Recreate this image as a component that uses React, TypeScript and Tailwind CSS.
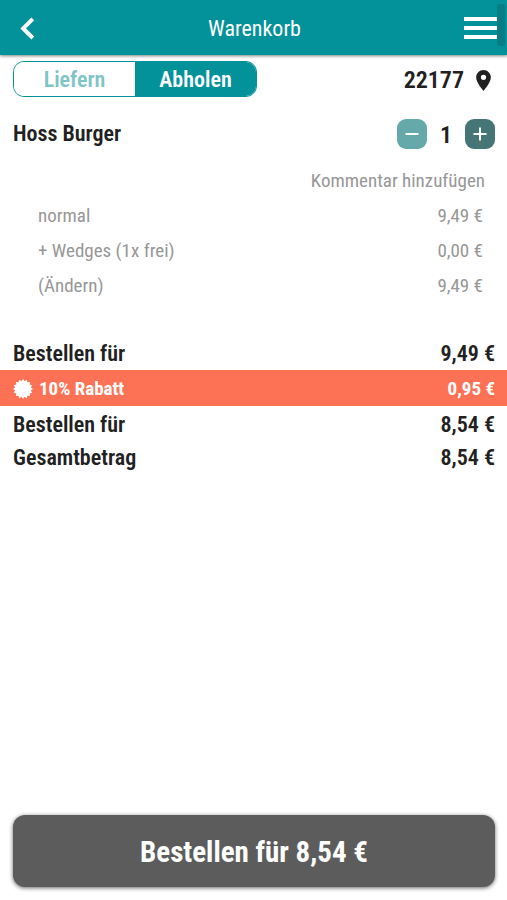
import { useState } from "react";

const options = [
  { label: "normal", price: "9,49 €" },
  { label: "+ Wedges (1x frei)", price: "0,00 €" },
  { label: "(Ändern)", price: "9,49 €" },
];

const burst = Array.from({ length: 32 }, (_, i) => {
  const r = i % 2 === 0 ? 10 : 8;
  const a = (Math.PI * 2 * i) / 32;
  return `${(10 + r * Math.sin(a)).toFixed(2)},${(10 - r * Math.cos(a)).toFixed(2)}`;
}).join(" ");

function TotalRow({ label, price }: { label: string; price: string }) {
  return (
    <div className="flex h-[33px] items-center justify-between pr-3 pl-[13px] text-[22px] leading-[26px] font-semibold">
      <dt>{label}</dt>
      <dd>{price}</dd>
    </div>
  );
}

export default function App() {
  const [pickup, setPickup] = useState(true);
  const [count, setCount] = useState(1);
  const on = "bg-[#03929a] text-white";
  const off = "bg-white text-[#7fc5c8]";

  return (
    <div className="flex min-h-screen flex-col bg-white font-['Roboto_Condensed','Roboto',sans-serif] text-[#212121]">
      <header className="relative grid h-[55px] grid-cols-[1fr_auto_1fr] items-center bg-[#03929a] pr-[10px] pl-[18px] text-white shadow-[0_1px_3px_rgba(0,0,0,0.5)]">
        <button type="button" aria-label="Zurück" className="justify-self-start">
          <svg width="18" height="24" viewBox="0 0 18 24" fill="none" stroke="currentColor" strokeWidth="4">
            <path d="M14.8 2.8 L5.2 12.4 L14.8 22" />
          </svg>
        </button>
        <h1 className="pt-0.5 pr-1.5 text-[22px] leading-[26px]">Warenkorb</h1>
        <button type="button" aria-label="Menü" className="justify-self-end">
          <svg width="33" height="24" viewBox="0 0 33 24" fill="currentColor">
            <path d="M0 1h33v4H0zM0 10h33v4H0zM0 19h33v4H0z" />
          </svg>
        </button>
        <span className="absolute top-1 right-0.5 h-[42px] w-2 rounded-[3px] bg-[#087d86]" />
      </header>

      <main className="flex grow flex-col">
        <div className="flex items-center justify-between pt-1.5 pr-4 pl-[13px]">
          <div className="grid h-9 w-[244px] grid-cols-2 overflow-hidden rounded-[11px] border border-[#03929a] text-[22px] leading-[26px] font-semibold">
            <button type="button" onClick={() => setPickup(false)} className={`pt-0.5 ${pickup ? off : on}`}>
              Liefern
            </button>
            <button type="button" onClick={() => setPickup(true)} className={`pt-0.5 ${pickup ? on : off}`}>
              Abholen
            </button>
          </div>
          <button type="button" className="flex items-center gap-3 pt-0.5 text-2xl leading-7 font-semibold">
            22177
            <svg width="15" height="21" viewBox="5 2 14 20" fill="currentColor">
              <path d="M12 2C8.130 2 5 5.130 5 9c0 5.250 7 13 7 13s7-7.750 7-13c0-3.870-3.130-7-7-7zm0 9.500a2.500 2.500 0 1 1 0-5 2.500 2.500 0 0 1 0 5z" />
            </svg>
          </button>
        </div>

        <section className="mt-[22px]">
          <div className="flex h-[30px] items-center justify-between pr-3 pl-[13px] font-semibold">
            <h2 className="text-[22px] leading-[26px]">Hoss Burger</h2>
            <div className="flex items-center">
              <button
                type="button"
                aria-label="Weniger"
                onClick={() => setCount(Math.max(0, count - 1))}
                className="flex size-[30px] items-center justify-center rounded-[9px] bg-[#66a9aa] text-white"
              >
                <svg width="14" height="14" viewBox="0 0 14 14" fill="none" stroke="currentColor" strokeWidth="2">
                  <path d="M0.500 7h13" />
                </svg>
              </button>
              <span className="w-[38px] pt-0.5 text-center text-2xl leading-7">{count}</span>
              <button
                type="button"
                aria-label="Mehr"
                onClick={() => setCount(count + 1)}
                className="flex size-[30px] items-center justify-center rounded-[9px] bg-[#467576] text-white"
              >
                <svg width="14" height="14" viewBox="0 0 14 14" fill="none" stroke="currentColor" strokeWidth="2">
                  <path d="M0.500 7h13M7 0.500v13" />
                </svg>
              </button>
            </div>
          </div>
          <div className="mt-3.5 text-[19px] leading-6 text-[#979797]">
            <button type="button" className="ml-auto flex h-[35px] items-center pr-[22px]">
              Kommentar hinzufügen
            </button>
            <ul>
              {options.map((o) => (
                <li key={o.label} className="flex h-[35px] items-center justify-between pr-6 pl-[38px]">
                  <span>{o.label}</span>
                  <span>{o.price}</span>
                </li>
              ))}
            </ul>
          </div>
        </section>

        <dl className="mt-[34px]">
          <TotalRow label="Bestellen für" price="9,49 €" />
          <div className="mb-0.5 flex h-9 items-center justify-between bg-[#fd7254] pt-0.5 pr-3 pl-[13px] text-[19px] leading-6 font-bold text-white">
            <dt className="flex items-center gap-1.5">
              <svg width="20" height="20" viewBox="0 0 20 20" fill="currentColor">
                <polygon points={burst} />
              </svg>
              10% Rabatt
            </dt>
            <dd>0,95 €</dd>
          </div>
          <TotalRow label="Bestellen für" price="8,54 €" />
          <TotalRow label="Gesamtbetrag" price="8,54 €" />
        </dl>
      </main>

      <footer className="pr-3 pb-[13px] pl-[13px]">
        <button
          type="button"
          className="h-[72px] w-full rounded-xl bg-[#5c5c5c] pt-0.5 text-[29px] leading-9 font-bold text-white shadow-[0_1px_4px_rgba(0,0,0,0.6)]"
        >
          Bestellen für 8,54 €
        </button>
      </footer>
    </div>
  );
}
